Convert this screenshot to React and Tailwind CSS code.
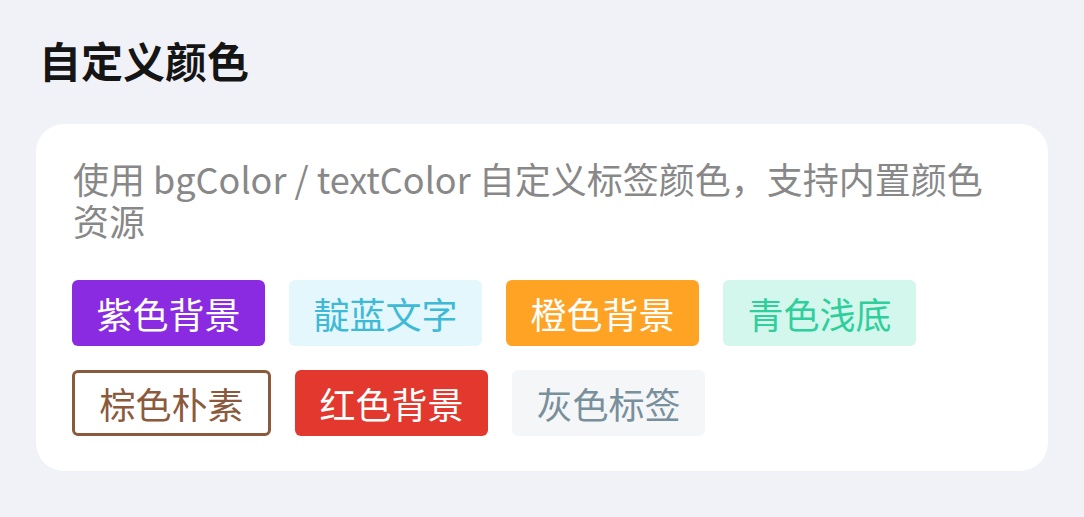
const tags = [
  { label: "紫色背景", className: "bg-[#8a2be2] text-white" },
  { label: "靛蓝文字", className: "bg-[#e4f7fc] text-[#3fbad6]" },
  { label: "橙色背景", className: "bg-[#ffa325] text-white" },
  { label: "青色浅底", className: "bg-[#d3f7ed] text-[#2fcf9c]" },
  { label: "棕色朴素", className: "border-[3px] border-[#8b5a3c] bg-white text-[#8b5a3c]" },
  { label: "红色背景", className: "bg-[#e2382d] text-white" },
  { label: "灰色标签", className: "bg-[#f5f6f7] text-[#78909c]" },
];

export default function App() {
  return (
    <div
      className="min-h-[517px] bg-[#f1f2f7] px-[36px] pt-[35px]"
      style={{ fontFamily: '"Noto Sans CJK SC", "Noto Sans", sans-serif' }}
    >
      <h1 className="pl-[3px] text-[42px] font-bold leading-[50px] text-[#151515]">
        自定义颜色
      </h1>

      <div className="mt-[39px] rounded-[28px] bg-white px-[36px] pt-[33px] pb-[35px]">
        <p className="pl-[1px] text-[36px] leading-[42px] text-[#888888]">
          使用 bgColor / textColor 自定义标签颜色，支持内置颜色资源
        </p>

        <div className="mt-[39px] flex flex-wrap gap-[24px]">
          {tags.map((tag) => (
            <span
              key={tag.label}
              className={`flex h-[66px] items-center rounded-[6px] px-[24.5px] text-[36px] leading-none ${tag.className}`}
            >
              {tag.label}
            </span>
          ))}
        </div>
      </div>
    </div>
  );
}
